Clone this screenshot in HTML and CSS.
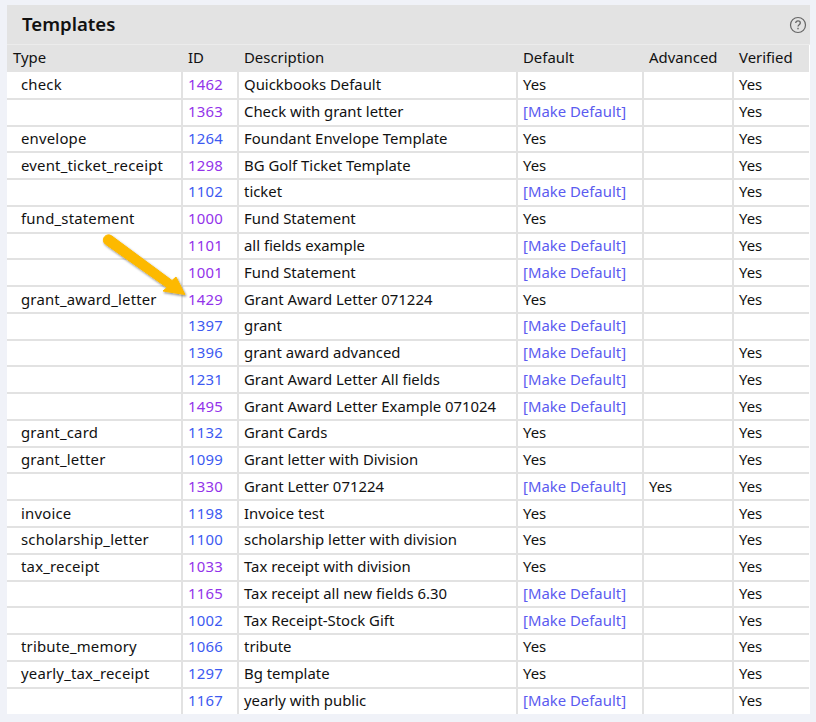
FILE: index.html
```html
<!DOCTYPE html>
<html>
<head>
<meta name="viewport" content="width=device-width, initial-scale=1">
<title>Templates</title>
<link rel="stylesheet" href="styles.css">
</head>
<body>

<div class="panel">
  <div class="panel-title">
    <h2>Templates</h2>
    <svg class="help" width="18" height="18" viewBox="0 0 18 18">
      <circle cx="9" cy="9" r="7.5" fill="none" stroke="#666" stroke-width="1.2"/>
      <path d="M6.7 7.1c0-1.4 1-2.2 2.3-2.2s2.3 .8 2.3 2c0 1.8-2.3 1.8-2.3 3.6" fill="none" stroke="#666" stroke-width="1.3"/>
      <rect x="8.3" y="11.8" width="1.4" height="1.5" fill="#666"/>
    </svg>
  </div>
  <table class="templates">
    <colgroup>
      <col class="c-type"><col class="c-id"><col class="c-desc"><col class="c-def"><col class="c-adv"><col class="c-ver">
    </colgroup>
    <thead>
      <tr><th>Type</th><th>ID</th><th>Description</th><th>Default</th><th>Advanced</th><th>Verified</th></tr>
    </thead>
    <tbody>
      <tr><td class="type">check</td><td class="id"><a class="seen" href="#">1462</a></td><td>Quickbooks Default</td><td>Yes</td><td></td><td>Yes</td></tr>
      <tr><td class="type"></td><td class="id"><a class="seen" href="#">1363</a></td><td>Check with grant letter</td><td><a class="mk" href="#">[Make Default]</a></td><td></td><td>Yes</td></tr>
      <tr><td class="type">envelope</td><td class="id"><a href="#">1264</a></td><td>Foundant Envelope Template</td><td>Yes</td><td></td><td>Yes</td></tr>
      <tr><td class="type">event_ticket_receipt</td><td class="id"><a class="seen" href="#">1298</a></td><td>BG Golf Ticket Template</td><td>Yes</td><td></td><td>Yes</td></tr>
      <tr><td class="type"></td><td class="id"><a href="#">1102</a></td><td>ticket</td><td><a class="mk" href="#">[Make Default]</a></td><td></td><td>Yes</td></tr>
      <tr><td class="type">fund_statement</td><td class="id"><a class="seen" href="#">1000</a></td><td>Fund Statement</td><td>Yes</td><td></td><td>Yes</td></tr>
      <tr><td class="type"></td><td class="id"><a class="seen" href="#">1101</a></td><td>all fields example</td><td><a class="mk" href="#">[Make Default]</a></td><td></td><td>Yes</td></tr>
      <tr><td class="type"></td><td class="id"><a class="seen" href="#">1001</a></td><td>Fund Statement</td><td><a class="mk" href="#">[Make Default]</a></td><td></td><td>Yes</td></tr>
      <tr><td class="type">grant_award_letter</td><td class="id"><a class="seen" href="#">1429</a></td><td>Grant Award Letter 071224</td><td>Yes</td><td></td><td>Yes</td></tr>
      <tr><td class="type"></td><td class="id"><a href="#">1397</a></td><td>grant</td><td><a class="mk" href="#">[Make Default]</a></td><td></td><td></td></tr>
      <tr><td class="type"></td><td class="id"><a href="#">1396</a></td><td>grant award advanced</td><td><a class="mk" href="#">[Make Default]</a></td><td></td><td>Yes</td></tr>
      <tr><td class="type"></td><td class="id"><a href="#">1231</a></td><td>Grant Award Letter All fields</td><td><a class="mk" href="#">[Make Default]</a></td><td></td><td>Yes</td></tr>
      <tr><td class="type"></td><td class="id"><a class="seen" href="#">1495</a></td><td>Grant Award Letter Example 071024</td><td><a class="mk" href="#">[Make Default]</a></td><td></td><td>Yes</td></tr>
      <tr><td class="type">grant_card</td><td class="id"><a href="#">1132</a></td><td>Grant Cards</td><td>Yes</td><td></td><td>Yes</td></tr>
      <tr><td class="type">grant_letter</td><td class="id"><a href="#">1099</a></td><td>Grant letter with Division</td><td>Yes</td><td></td><td>Yes</td></tr>
      <tr><td class="type"></td><td class="id"><a class="seen" href="#">1330</a></td><td>Grant Letter 071224</td><td><a class="mk" href="#">[Make Default]</a></td><td>Yes</td><td>Yes</td></tr>
      <tr><td class="type">invoice</td><td class="id"><a href="#">1198</a></td><td>Invoice test</td><td>Yes</td><td></td><td>Yes</td></tr>
      <tr><td class="type">scholarship_letter</td><td class="id"><a href="#">1100</a></td><td>scholarship letter with division</td><td>Yes</td><td></td><td>Yes</td></tr>
      <tr><td class="type">tax_receipt</td><td class="id"><a class="seen" href="#">1033</a></td><td>Tax receipt with division</td><td>Yes</td><td></td><td>Yes</td></tr>
      <tr><td class="type"></td><td class="id"><a class="seen" href="#">1165</a></td><td>Tax receipt all new fields 6.30</td><td><a class="mk" href="#">[Make Default]</a></td><td></td><td>Yes</td></tr>
      <tr><td class="type"></td><td class="id"><a href="#">1002</a></td><td>Tax Receipt-Stock Gift</td><td><a class="mk" href="#">[Make Default]</a></td><td></td><td>Yes</td></tr>
      <tr><td class="type">tribute_memory</td><td class="id"><a href="#">1066</a></td><td>tribute</td><td>Yes</td><td></td><td>Yes</td></tr>
      <tr><td class="type">yearly_tax_receipt</td><td class="id"><a href="#">1297</a></td><td>Bg template</td><td>Yes</td><td></td><td>Yes</td></tr>
      <tr><td class="type"></td><td class="id"><a href="#">1167</a></td><td>yearly with public</td><td><a class="mk" href="#">[Make Default]</a></td><td></td><td>Yes</td></tr>
    </tbody>
  </table>
  <svg class="arrow" width="95" height="75" viewBox="0 0 95 75">
    <defs>
      <filter id="shadow" x="-20%" y="-20%" width="140%" height="140%">
        <feDropShadow dx="1" dy="1.5" stdDeviation="1.2" flood-color="#000" flood-opacity="0.45"/>
      </filter>
    </defs>
    <path d="M11.5 5.800 L72 50.500 L76 47 L85 64.500 L63 61 L67 57.500 L5.500 14.200 A5.100 5.100 0 0 1 11.500 5.800 Z" fill="#fdb900" stroke="#fdb900" stroke-width="1" stroke-linejoin="round" filter="url(#shadow)"/>
  </svg>
</div>

</body>
</html>
```

FILE: styles.css
```css
* {
  box-sizing: border-box;
}

body {
  margin: 0;
  background: #f0f2f8;
  font-family: "Noto Sans", sans-serif;
  font-size: 14.9px;
  color: #111;
}

.panel {
  position: relative;
  width: 803px;
  margin: 5px 0 0 7px;
  background: #fff;
}

.panel-title {
  display: flex;
  align-items: center;
  justify-content: space-between;
  height: 40px;
  padding: 0 3px 0 15px;
  background: #e3e3e3;
  border-bottom: 1px solid #ececec;
}

.panel-title h2 {
  margin: 0 0 2px;
  font-size: 18.6px;
  font-weight: 600;
}

.help {
  margin-top: 1px;
}

.templates {
  width: 802px;
  border-collapse: collapse;
  table-layout: fixed;
}

.c-type { width: 175px; }
.c-id { width: 56px; }
.c-desc { width: 279px; }
.c-def { width: 126px; }
.c-adv { width: 90px; }
.c-ver { width: 76px; }

.templates th {
  height: 27px;
  padding: 0 5px 3px 6px;
  background: #e3e3e3;
  font-weight: 400;
  text-align: left;
}

.templates td {
  height: 26.78px;
  padding: 0 5px 2px 5px;
  border: 2px solid #e2e2e2;
  border-width: 0 2px 2px 0;
}

.templates td:last-child {
  border-right: 0;
}

.templates tr:last-child td {
  border-bottom: 0;
}

.templates td.type {
  padding-left: 14px;
  letter-spacing: 0.2px;
}

.templates td.id {
  padding-left: 5px;
  letter-spacing: 0.2px;
}

a {
  color: #3d5af1;
  text-decoration: none;
}

a.seen {
  color: #9333ea;
}

a.mk {
  color: #5b5bf0;
}

.arrow {
  position: absolute;
  left: 93px;
  top: 225px;
}
```
